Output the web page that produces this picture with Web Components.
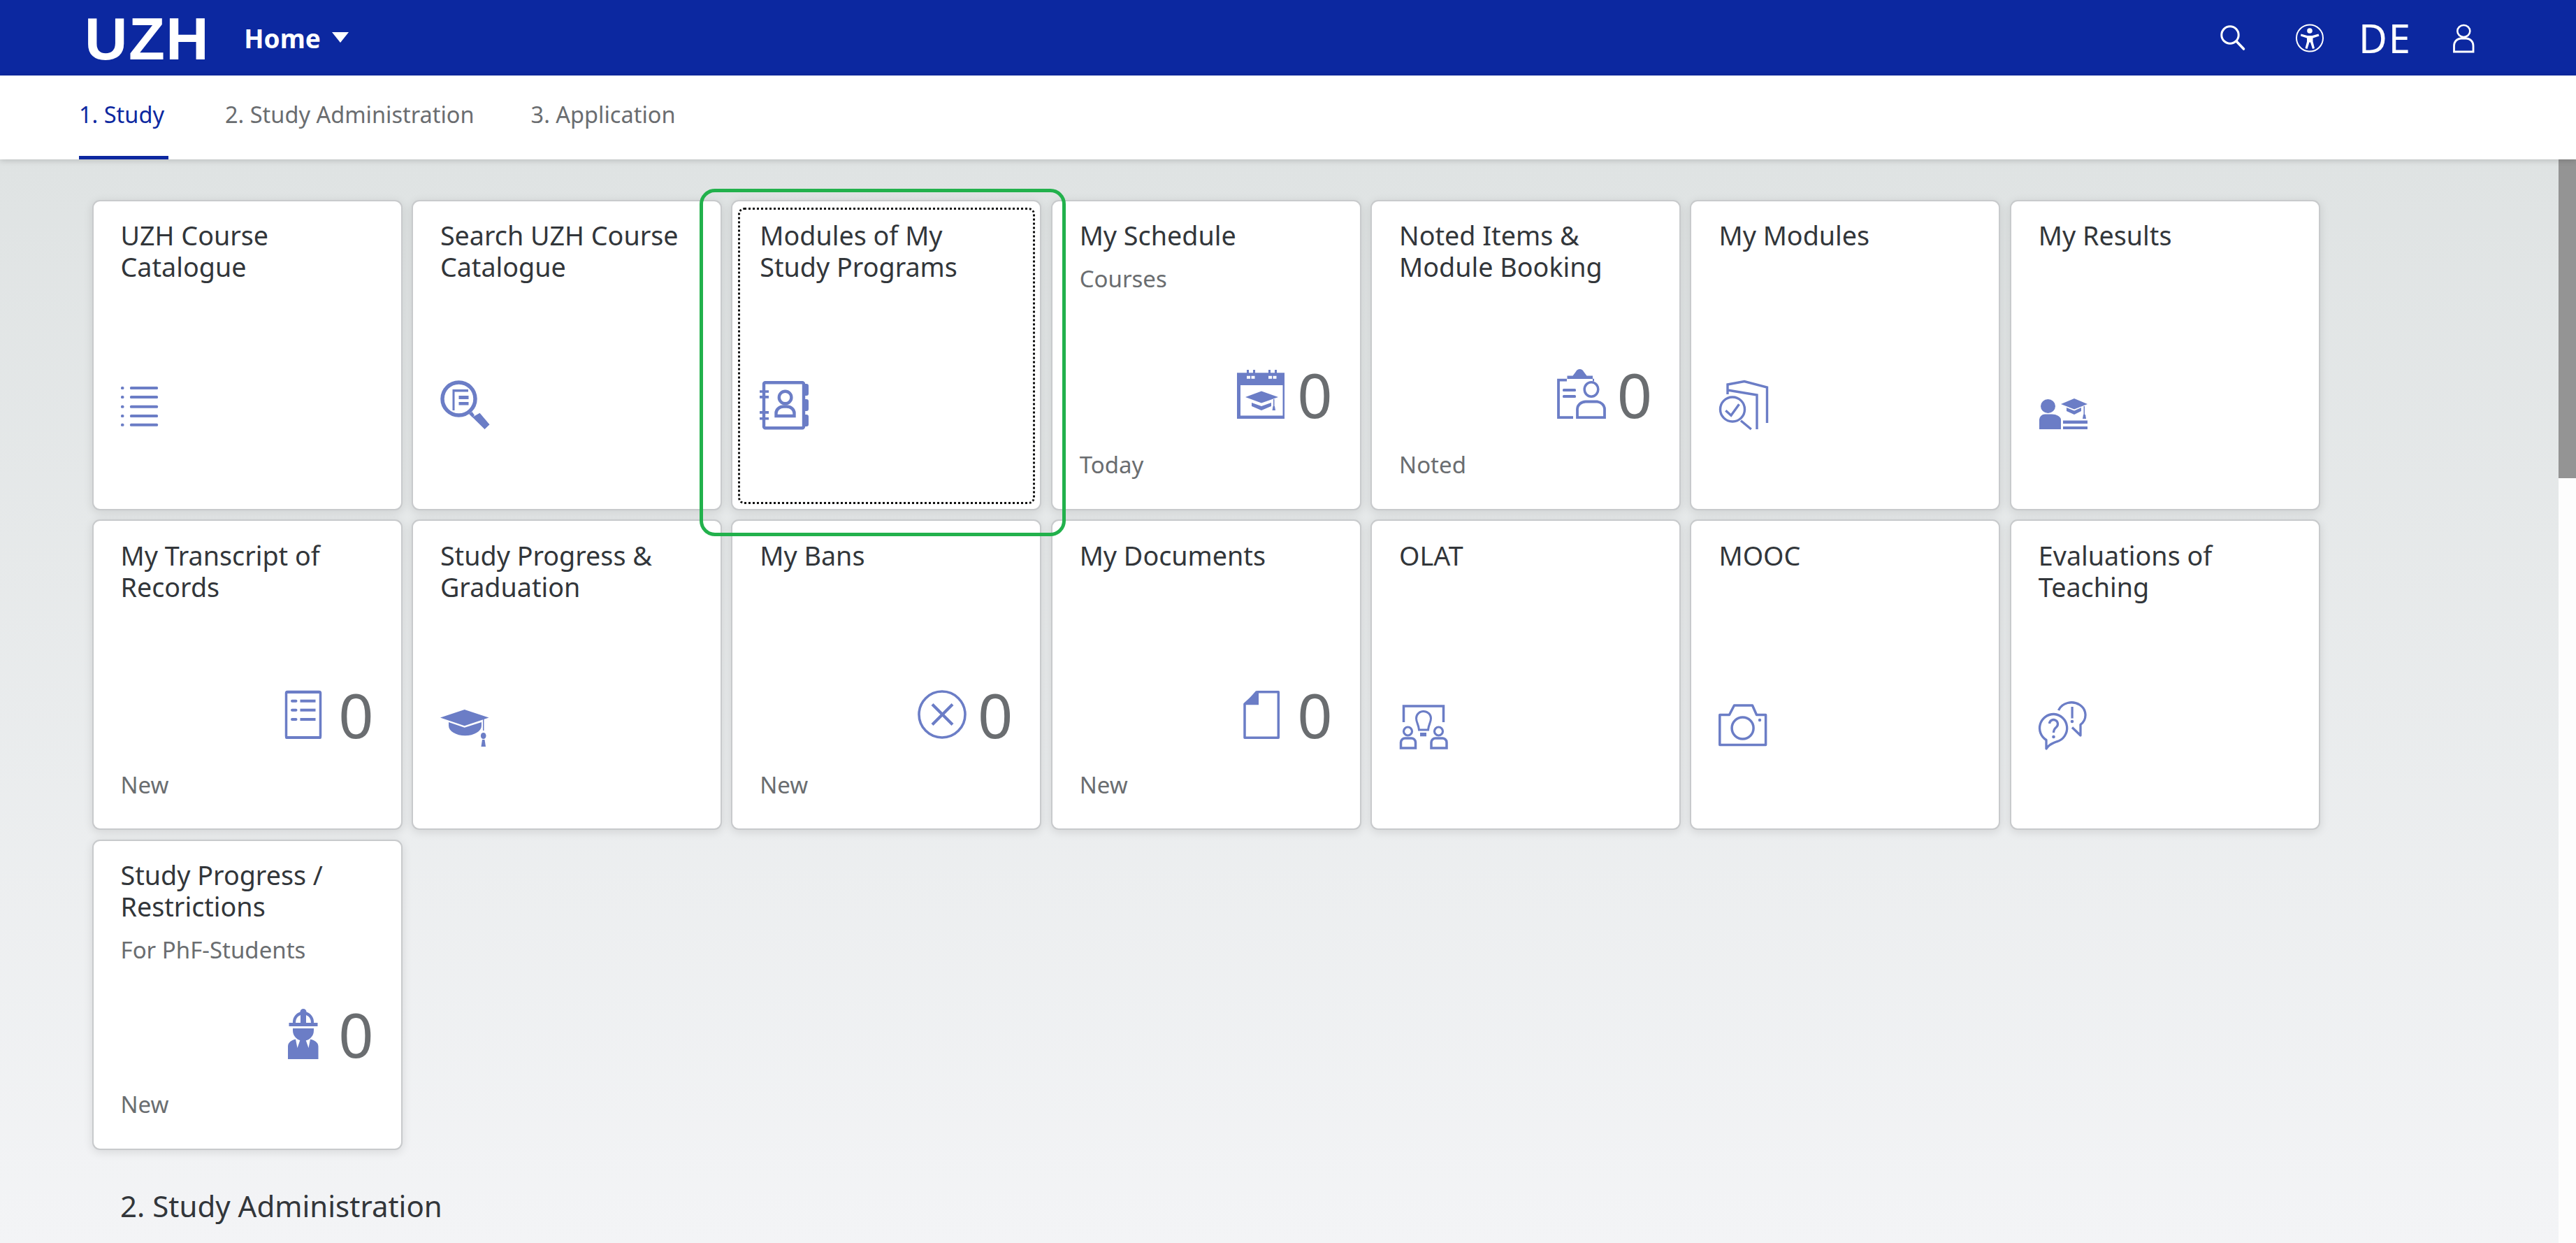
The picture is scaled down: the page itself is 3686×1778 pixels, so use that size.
<!DOCTYPE html>
<html lang="en">
<head>
<meta charset="utf-8">
<title>UZH Home</title>
<style>
  html, body { margin: 0; height: 100%; overflow: hidden; }
  body { font-family: "Noto Sans", "Liberation Sans", sans-serif; color: #32363a; }
  uzh-page { height: 1778px; }
</style>
</head>
<body>
<uzh-page>
  <uzh-shell-bar slot="bar"></uzh-shell-bar>
  <uzh-anchor-nav slot="bar"></uzh-anchor-nav>

  <uzh-tile-group>
    <uzh-tile><uzh-icon slot="icon" name="list"></uzh-icon>UZH Course Catalogue</uzh-tile>
    <uzh-tile><uzh-icon slot="icon" name="search-doc"></uzh-icon>Search UZH Course Catalogue</uzh-tile>
    <uzh-tile focused><uzh-icon slot="icon" name="address-book"></uzh-icon>Modules of My Study Programs</uzh-tile>
    <uzh-tile sub="Courses" count="0" foot="Today"><uzh-icon slot="icon" name="calendar"></uzh-icon>My Schedule</uzh-tile>
    <uzh-tile count="0" foot="Noted"><uzh-icon slot="icon" name="clipboard"></uzh-icon>Noted Items &amp; Module Booking</uzh-tile>
    <uzh-tile><uzh-icon slot="icon" name="books"></uzh-icon>My Modules</uzh-tile>
    <uzh-tile><uzh-icon slot="icon" name="results"></uzh-icon>My Results</uzh-tile>

    <uzh-tile count="0" foot="New"><uzh-icon slot="icon" name="transcript"></uzh-icon>My Transcript of Records</uzh-tile>
    <uzh-tile><uzh-icon slot="icon" name="graduation"></uzh-icon>Study Progress &amp; Graduation</uzh-tile>
    <uzh-tile count="0" foot="New"><uzh-icon slot="icon" name="ban"></uzh-icon>My Bans</uzh-tile>
    <uzh-tile count="0" foot="New"><uzh-icon slot="icon" name="document"></uzh-icon>My Documents</uzh-tile>
    <uzh-tile><uzh-icon slot="icon" name="learning"></uzh-icon>OLAT</uzh-tile>
    <uzh-tile><uzh-icon slot="icon" name="camera"></uzh-icon>MOOC</uzh-tile>
    <uzh-tile><uzh-icon slot="icon" name="feedback"></uzh-icon>Evaluations of Teaching</uzh-tile>

    <uzh-tile sub="For PhF-Students" count="0" foot="New"><uzh-icon slot="icon" name="worker"></uzh-icon>Study Progress / Restrictions</uzh-tile>
  </uzh-tile-group>

  <uzh-section-title>2. Study Administration</uzh-section-title>
</uzh-page>

<script>
const ICONS = {
  list: `<g fill="currentColor"><rect x="0" y="9" width="4.4" height="4" rx="1.5"/><rect x="0" y="22" width="4.4" height="4" rx="1.5"/><rect x="0" y="35.7" width="4.4" height="4" rx="1.5"/><rect x="0" y="49" width="4.4" height="4" rx="1.5"/><rect x="0" y="61.7" width="4.4" height="4" rx="1.5"/><rect x="13" y="9" width="40" height="4" rx="1.5"/><rect x="13" y="22" width="40" height="4" rx="1.5"/><rect x="13" y="35.7" width="40" height="4" rx="1.5"/><rect x="13" y="49" width="40" height="4" rx="1.5"/><rect x="13" y="61.7" width="40" height="4" rx="1.5"/></g>`,
  "search-doc": `<circle cx="26.5" cy="26.5" r="23.5" fill="none" stroke="currentColor" stroke-width="5.5"/><path fill="currentColor" d="M17.5 13H40v3.5H20.5V43h-3zM26.5 22h14v5h-14zM26.5 31h14v4.5h-14zM41 48l4.5-3 3.500 5-3 3zM46 52.700L56.500 46.700 70.500 63.300 63.500 70z"/>`,
  "address-book": `<g fill="none" stroke="currentColor" stroke-width="4.4"><rect x="6" y="3.200" width="57" height="65" rx="2"/><circle cx="36.600" cy="24.500" r="8.800"/><path d="M23.500 51V47a11 9.500 0 0 1 11-9.500h4a11 9.500 0 0 1 11 9.500v4z"/></g><g fill="currentColor"><rect x="0" y="14.300" width="13" height="3.500"/><rect x="0" y="22" width="13" height="3.800"/><rect x="0" y="44" width="13" height="3.800"/><rect x="0" y="53" width="13" height="3.500"/><path d="M65 5h2a3 3 0 0 1 3 3v11a3 3 0 0 1-3 3h-2zM65 27h2a3 3 0 0 1 3 3v11a3 3 0 0 1-3 3h-2zM65 49h2a3 3 0 0 1 3 3v11a3 3 0 0 1-3 3h-2z"/></g>`,
  calendar: `<path fill="currentColor" fill-rule="evenodd" d="M14 0h3v4.300h6V0h3v4.300h19V0h3v4.300h6V0h3v4.300h11V70H0V4.300h14zM5 22v43.500h60.500V22zM14 8.700v4h5v-4zm6.500 0v4h5v-4zM45 8.700v4h5v-4zm6.500 0v4h5v-4z"/><path fill="currentColor" d="M35 30.500L59 39 35 47.500 12 39zM21 47l14 5 14-5v5l-14 6-14-6zM52 42h1.500v10H52zM51.500 52h2.500l1 6h-4.500z"/>`,
  clipboard: `<g fill="none" stroke="currentColor"><path stroke-width="3.800" d="M23 68.100H2V14.700h12M51 14.700H53"/><ellipse cx="49" cy="28" rx="9.800" ry="10.200" stroke-width="3.500"/><path stroke-width="3.800" d="M29 68.100V56a12 11 0 0 1 12-10.500h16A12 11 0 0 1 68 56v12.100z"/></g><path fill="currentColor" d="M14.500 8.500h8L27 2.500a6 6 0 0 1 11 0l4.500 6h8.500v4.500h-36.500z"/><g fill="currentColor"><rect x="8" y="27" width="19" height="4" rx="1.500"/><rect x="8" y="36" width="19" height="4" rx="1.500"/></g>`,
  books: `<g fill="none" stroke="currentColor" stroke-width="3.400"><circle cx="20" cy="41.500" r="17.500"/><path d="M10.300 43.300L18 50.300 29.500 34.300M32 57.700L46.800 70"/><path d="M13 20V6L37 1.500 69.500 10V61M13 14L55 21V70"/></g>`,
  results: `<g fill="currentColor"><ellipse cx="13.500" cy="37" rx="10.500" ry="10"/><path d="M1 70V56a8 8 0 0 1 8-7.500h10a13 8 0 0 1 13 7.500v14zM35 57.500h35V62H35zM35 66h35v4H35zM51 26l19 8-19 7.500-19-7.500zM40 39l11 4.500 10-4.500v5l-10 5-11-5zM64.500 37h1.500v12h-1.500zM64 49h3l1 6h-5z"/></g>`,
  transcript: `<rect x="11.500" y="2.500" width="49" height="65.500" rx="2" fill="none" stroke="currentColor" stroke-width="3.500"/><rect x="11" y="1" width="50" height="4" rx="2" fill="currentColor"/><rect x="10" y="66" width="52" height="4" rx="2" fill="currentColor"/><g fill="currentColor"><rect x="18" y="13.700" width="9.500" height="4" rx="2"/><rect x="31.500" y="13.700" width="22" height="4"/><rect x="18" y="26.700" width="9.500" height="4" rx="2"/><rect x="31.500" y="26.700" width="22" height="4"/><rect x="18" y="40" width="9.500" height="4" rx="2"/><rect x="31.500" y="40" width="22" height="4"/></g>`,
  graduation: `<g fill="currentColor"><path d="M34.700 13L69.500 24.500 34.700 36.300 0 24.500zM12 31L34.700 38.800 59 31V36A23 14 0 0 1 12 36z"/><rect x="61" y="25" width="1.500" height="18"/><ellipse cx="61.700" cy="50.500" rx="3.800" ry="4.500"/><path d="M60 56h3.500l1.500 10h-6.500z"/></g>`,
  ban: `<circle cx="35" cy="35" r="33" fill="none" stroke="currentColor" stroke-width="3.600"/><path d="M21 20.500L50 49.500M50 20.500L21 49.500" stroke="currentColor" stroke-width="4.200" fill="none"/>`,
  document: `<path d="M30 2.700H59.300V68.300H11V20z" fill="none" stroke="currentColor" stroke-width="3.500" stroke-linejoin="round"/><path d="M27 1.300H31V21.300H9.500z" fill="currentColor"/>`,
  learning: `<g fill="none" stroke="currentColor"><path stroke-width="3.500" d="M6.500 31V8H63.500V31"/><path stroke-width="3" d="M35 15.500a10.500 10 0 0 1 10.500 10c0 6-3.500 9-4 16.500h-13c-.5-7.500-4-10.500-4-16.500a10.500 10 0 0 1 10.500-10z"/><circle cx="12.500" cy="44" r="6" stroke-width="3.200"/><circle cx="56.500" cy="44" r="6" stroke-width="3.200"/><path stroke-width="3.500" d="M2.500 68V60a6 6 0 0 1 6-6h8.500a6 6 0 0 1 6.500 6v8zM46 68V60a6 6 0 0 1 6-6h9a6 6 0 0 1 7 6v8z"/></g><rect x="30" y="46" width="9" height="5.300" fill="currentColor"/>`,
  camera: `<g fill="none" stroke="currentColor" stroke-width="3.500"><path stroke-linejoin="round" d="M1.800 20.500H15.500L22.500 7H48.500L54.500 20.500H67.600V63.500H1.800z"/><circle cx="34.600" cy="39.500" r="15.500"/></g><circle cx="59" cy="28" r="2.200" fill="currentColor"/>`,
  feedback: `<g fill="none" stroke="currentColor" stroke-width="3.300" stroke-linejoin="round"><path d="M22 19.500a19.800 20 0 0 1 4 39.300C20 61 15 63 11 69V56.500A20 20 0 0 1 22 19.500z"/><path d="M28.500 14A20 18 0 1 1 60 34.500V50L48 38.500"/><path d="M15.500 33a6 6 0 1 1 10 5c-3 2.500-4 4-4 8"/></g><g fill="currentColor"><circle cx="21.500" cy="52" r="2.300"/><rect x="46.500" y="9" width="3.200" height="16.500"/><circle cx="48" cy="30" r="2.300"/></g>`,
  worker: `<g fill="currentColor"><path fill-rule="evenodd" d="M15.500 19H21A15 15 0 0 1 31.500 3.500a4.500 4.500 0 0 1 9 0A15 15 0 0 1 51 19h5.500v5h-41zM25 19h7V8a11.500 11.500 0 0 0-7 11zM40 19h7a11.500 11.500 0 0 0-7-11z"/><path d="M21 27h30v3a15 15 0 0 1-30 0z"/><path d="M14 71V53c0-5 3-8 9-10l2-.5 2.500 12.500 4-11.500h8l4 11.500 2.500-12.500 2 .5c6 2 9.500 5 9.500 10v18z"/></g>`,
  search: `<circle cx="14" cy="14" r="12.200" fill="none" stroke="currentColor" stroke-width="3"/><path d="M23 23L33.500 34" stroke="currentColor" stroke-width="3.600" stroke-linecap="round"/>`,
  access: `<circle cx="20" cy="20.500" r="19" fill="none" stroke="currentColor" stroke-width="2"/><circle cx="20" cy="10" r="3.800" fill="currentColor"/><path fill="currentColor" d="M7.500 14.500l9 2.500h7l9-2.500 1 3-9 3v5l2.500 9.500-3 1-3-9.500h-1.500l-3 9.500-3-1 2.500-9.500v-5l-9-3z"/>`,
  user: `<ellipse cx="15.300" cy="10.500" rx="9" ry="8.500" fill="none" stroke="currentColor" stroke-width="2.600"/><path d="M1.500 40V31.500A10 10.500 0 0 1 11.500 21h7.500a10 10.500 0 0 1 10 10.500V40z" fill="none" stroke="currentColor" stroke-width="2.800"/>`
};

class UzhIcon extends HTMLElement {
  connectedCallback() {
    const size = this.getAttribute("size") ?? "70 70";
    const [w, h] = size.split(" ");
    this.attachShadow({ mode: "open" }).innerHTML = `
      <style>
        :host { display: block; color: inherit; line-height: 0; width: ${w}px; height: ${h}px; }
        svg { display: block; overflow: visible; }
      </style>
      <svg width="${w}" height="${h}" viewBox="0 0 ${w} ${h}">${ICONS[this.getAttribute("name")] ?? ""}</svg>`;
  }
}
customElements.define("uzh-icon", UzhIcon);

class UzhPage extends HTMLElement {
  constructor() {
    super();
    this.attachShadow({ mode: "open" }).innerHTML = `
      <style>
        :host { display: flex; flex-direction: column; }
        .bars { flex: none; position: relative; z-index: 2; }
        .below { flex: 1; display: flex; min-height: 0; }
        main {
          flex: 1; min-width: 0; overflow: hidden;
          background: linear-gradient(to bottom, #dfe3e3, #f3f4f6);
        }
        .track { flex: none; width: 25px; background: #fdfdfd; }
        .thumb { height: 456px; background: #949494; }
      </style>
      <div class="bars"><slot name="bar"></slot></div>
      <div class="below">
        <main><slot></slot></main>
        <div class="track"><div class="thumb"></div></div>
      </div>`;
  }
}
customElements.define("uzh-page", UzhPage);

class UzhShellBar extends HTMLElement {
  constructor() {
    super();
    this.attachShadow({ mode: "open" }).innerHTML = `
      <style>
        :host {
          display: flex; align-items: center; height: 108px; box-sizing: border-box;
          padding: 0 145px 0 121px;
          background: #0c28a0; color: #fff;
        }
        .logo {
          font: 700 85px/1 "Liberation Sans", sans-serif; letter-spacing: 1.5px; margin-right: 49px;
          position: relative; top: 1px;
        }
        .home { font: 700 37px/1 "Noto Sans", sans-serif; }
        .caret {
          width: 0; height: 0; margin: 0 0 2px 16px;
          border-left: 12px solid transparent; border-right: 12px solid transparent; border-top: 15px solid #fff;
        }
        .spacer { flex: 1; }
        .lang { font: 400 56px/1 "Noto Sans", sans-serif; letter-spacing: 2px; margin: 0 59px 0 50px; }
        uzh-icon + uzh-icon { margin-left: 72px; }
      </style>
      <span class="logo">UZH</span>
      <span class="home">Home</span>
      <span class="caret"></span>
      <span class="spacer"></span>
      <uzh-icon name="search" size="36 36"></uzh-icon>
      <uzh-icon name="access" size="40 41"></uzh-icon>
      <span class="lang">DE</span>
      <uzh-icon name="user" size="31 41"></uzh-icon>`;
  }
}
customElements.define("uzh-shell-bar", UzhShellBar);

class UzhAnchorNav extends HTMLElement {
  constructor() {
    super();
    this.attachShadow({ mode: "open" }).innerHTML = `
      <style>
        :host {
          display: flex; gap: 81px; height: 120px; box-sizing: border-box;
          padding-left: 113px; background: #fff;
          box-shadow: 0 2px 8px rgba(0,0,0,.16);
          font: 400 32.500px/1 "Noto Sans", sans-serif;
        }
        a { display: flex; align-items: center; color: #6a6d70; box-sizing: border-box; padding-bottom: 3px; border-bottom: 5px solid transparent; }
        a.on { color: #0c28a0; border-bottom-color: #0c28a0; min-width: 128px; }
      </style>
      <a class="on">1. Study</a>
      <a>2. Study Administration</a>
      <a>3. Application</a>`;
  }
}
customElements.define("uzh-anchor-nav", UzhAnchorNav);

class UzhTileGroup extends HTMLElement {
  constructor() {
    super();
    this.attachShadow({ mode: "open" }).innerHTML = `
      <style>
        :host {
          display: grid; position: relative;
          grid-template-columns: repeat(7, 444px);
          gap: 13.700px 13.400px;
          padding: 57.500px 0 0 131.500px;
        }
        /* the green marker around the third tile */
        .mark {
          position: absolute; left: 1001px; top: 41.500px; width: 524px; height: 497.500px;
          box-sizing: border-box; border: 5px solid #22b14c; border-radius: 22px; z-index: 1;
        }
      </style>
      <slot></slot>
      <div class="mark"></div>`;
  }
}
customElements.define("uzh-tile-group", UzhTileGroup);

class UzhTile extends HTMLElement {
  connectedCallback() {
    const sub = this.getAttribute("sub");
    const foot = this.getAttribute("foot");
    const count = this.getAttribute("count");
    this.attachShadow({ mode: "open" }).innerHTML = `
      <style>
        :host {
          display: flex; flex-direction: column; position: relative;
          width: 444px; height: 444px; box-sizing: border-box;
          padding: 0 39px;
          background: #fff; border: 2px solid #c8cacc; border-radius: 11px;
          box-shadow: 0 3px 14px rgba(0,0,0,.11);
        }
        :host([focused])::after {
          content: ""; position: absolute; inset: 9px 7.600px 6.400px;
          border: 3px dotted #111; border-radius: 9px;
        }
        .head { height: 241.500px; padding-top: 26.500px; box-sizing: border-box; flex: none; }
        .title { font: 400 37.700px/45px "Noto Sans", sans-serif; color: #32363a; }
        .sub { font: 400 33px/40px "Noto Sans", sans-serif; color: #6a6d70; margin-top: 20px; }
        .body { height: 85px; flex: none; color: #6b7dc6; }
        .body.plain { padding-top: 15px; box-sizing: border-box; }
        .body.num { display: flex; justify-content: flex-end; gap: 16px; }
        .count { font: 400 88px/70px "Noto Sans", sans-serif; color: #6a6d70; }
        .foot { font: 400 33px/40px "Noto Sans", sans-serif; color: #6a6d70; margin-top: 31px; }
      </style>
      <div class="head">
        <div class="title"><slot></slot></div>
        ${sub ? `<div class="sub">${sub}</div>` : ""}
      </div>
      <div class="body ${count !== null ? "num" : "plain"}">
        <slot name="icon"></slot>
        ${count !== null ? `<span class="count">${count}</span>` : ""}
      </div>
      ${foot ? `<div class="foot">${foot}</div>` : ""}`;
  }
}
customElements.define("uzh-tile", UzhTile);

class UzhSectionTitle extends HTMLElement {
  constructor() {
    super();
    this.attachShadow({ mode: "open" }).innerHTML = `
      <style>
        :host {
          display: block; padding: 50px 0 0 172px;
          font: 400 42px/60px "Noto Sans", sans-serif; color: #32363a;
        }
      </style>
      <slot></slot>`;
  }
}
customElements.define("uzh-section-title", UzhSectionTitle);
</script>
</body>
</html>
